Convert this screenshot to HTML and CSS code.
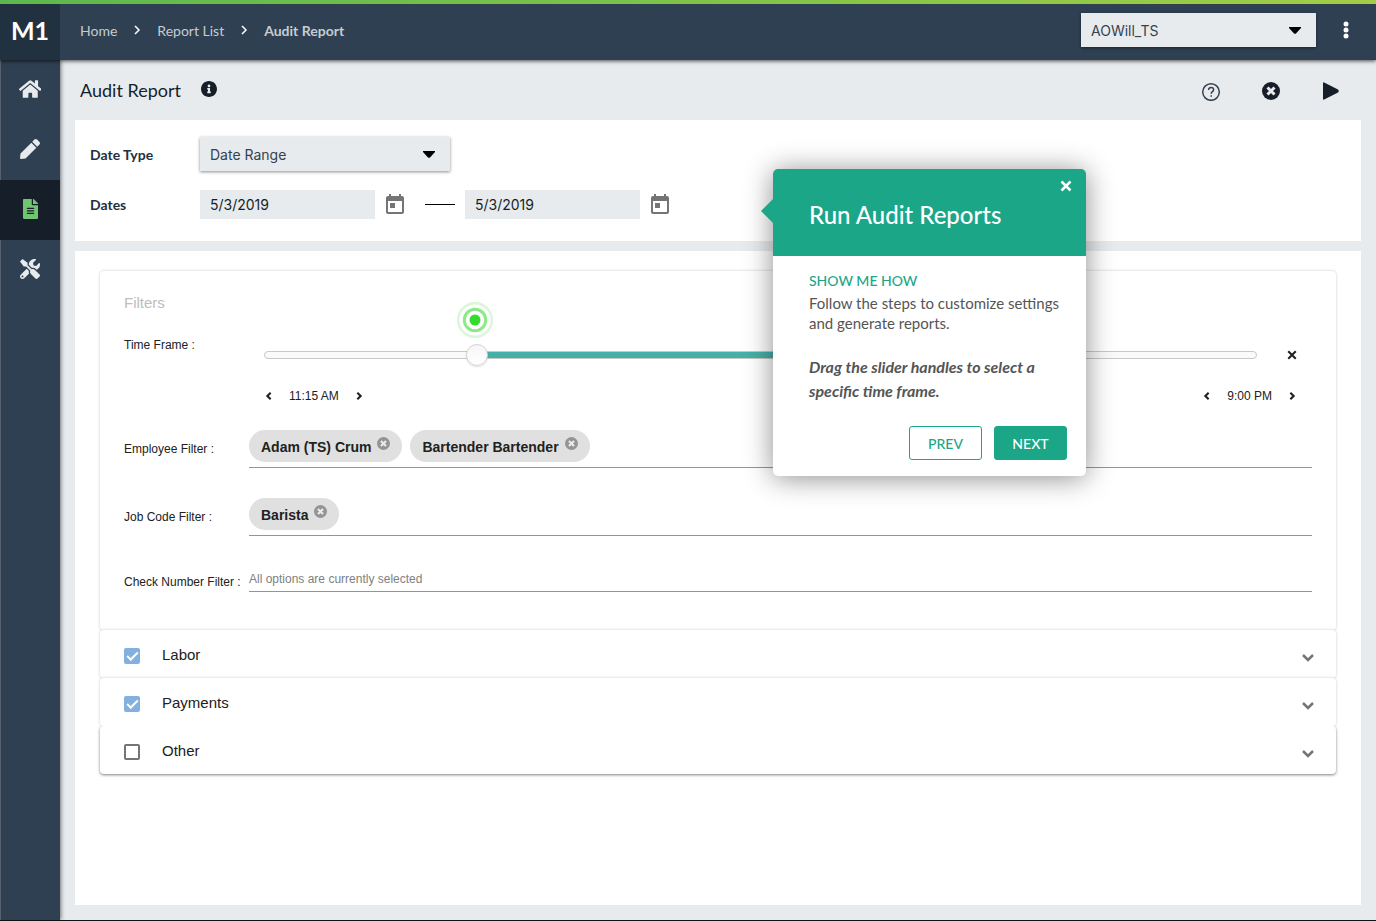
FILE: index.html
```html
<!DOCTYPE html>
<html lang="en">
<head>
  <meta charset="UTF-8">
  <meta name="viewport" content="width=device-width, initial-scale=1">
  <title>Audit Report</title>
  <link rel="stylesheet" href="styles.css">
</head>
<body>

  <svg class="sprite" aria-hidden="true">
    <symbol id="times-circle" viewBox="0 0 18 18">
      <circle cx="9" cy="9" r="9" fill="currentColor"/>
      <path class="cut" d="M5.500 5.500l7 7M12.500 5.500l-7 7"/>
    </symbol>
    <symbol id="times" viewBox="0 0 12 12">
      <path class="line" d="M1.500 1.500l9 9M10.500 1.500l-9 9"/>
    </symbol>
    <symbol id="left" viewBox="0 0 12 12">
      <path class="line" d="M8 2L4 6l4 4"/>
    </symbol>
    <symbol id="right" viewBox="0 0 12 12">
      <path class="line" d="M4 2l4 4-4 4"/>
    </symbol>
    <symbol id="caret" viewBox="0 0 12 7">
      <path d="M0 0h12v1L7 6.500Q6 7.200 5 6.500L0 1z"/>
    </symbol>
    <symbol id="chevron" viewBox="0 0 24 24">
      <path class="line" d="M7 9l5 5 5-5"/>
    </symbol>
    <symbol id="calendar" viewBox="0 0 24 24">
      <path d="M19 3h-1V1h-2v2H8V1H6v2H5c-1.110 0-1.990.9-1.990 2L3 19c0 1.100.890 2 2 2h14c1.100 0 2-.9 2-2V5c0-1.100-.9-2-2-2zm0 16H5V8h14v11zM7 10h5v5H7z"/>
    </symbol>
  </svg>

  <header class="topbar">
    <a class="logo" href="#">M1</a>
    <nav class="breadcrumb" aria-label="Breadcrumb">
      <a href="#">Home</a>
      <svg class="sep" viewBox="0 0 8 10"><path d="M2 1l4 4-4 4"/></svg>
      <a href="#">Report List</a>
      <svg class="sep" viewBox="0 0 8 10"><path d="M2 1l4 4-4 4"/></svg>
      <span class="current">Audit Report</span>
    </nav>
    <div class="select-box store-select">
      <select aria-label="Store">
        <option>AOWill_TS</option>
      </select>
      <svg class="caret"><use href="#caret"/></svg>
    </div>
    <button class="more-btn" aria-label="More options">
      <svg viewBox="0 0 6 18"><circle cx="3" cy="3" r="2.500"/><circle cx="3" cy="9" r="2.500"/><circle cx="3" cy="15" r="2.500"/></svg>
    </button>
  </header>

  <div class="layout">
    <nav class="sidebar" aria-label="Main">
      <a href="#" aria-label="Home">
        <svg class="wide" viewBox="0 0 576 512"><path d="M280.370 148.260L96 300.110V464a16 16 0 0 0 16 16l112.060-.29a16 16 0 0 0 15.920-16V368a16 16 0 0 1 16-16h64a16 16 0 0 1 16 16v95.640a16 16 0 0 0 16 16.050L464 480a16 16 0 0 0 16-16V300L295.670 148.260a12.190 12.190 0 0 0-15.300 0zM571.600 251.470L488 182.560V44.050a12 12 0 0 0-12-12h-56a12 12 0 0 0-12 12v72.610L318.470 43a48 48 0 0 0-61 0L4.340 251.470a12 12 0 0 0-1.600 16.900l25.500 31A12 12 0 0 0 45.150 301l235.220-193.740a12.190 12.190 0 0 1 15.300 0L530.900 301a12 12 0 0 0 16.900-1.600l25.500-31a12 12 0 0 0-1.700-16.930z"/></svg>
      </a>
      <a href="#" aria-label="Edit">
        <svg viewBox="0 0 512 512"><path d="M290.740 93.240l128.020 128.020-277.990 277.990-114.140 12.600C11.350 513.540-1.560 500.620.140 485.340l12.700-114.220 277.900-277.880zm207.200-19.060l-60.110-60.110c-18.750-18.750-49.160-18.750-67.910 0l-56.550 56.550 128.020 128.020 56.550-56.550c18.750-18.760 18.750-49.160 0-67.910z"/></svg>
      </a>
      <a href="#" class="active" aria-label="Reports">
        <svg viewBox="0 0 384 512"><path d="M224 136V0H24C10.700 0 0 10.700 0 24v464c0 13.300 10.700 24 24 24h336c13.300 0 24-10.700 24-24V160H248c-13.200 0-24-10.800-24-24zm64 236c0 6.600-5.400 12-12 12H108c-6.600 0-12-5.400-12-12v-8c0-6.600 5.400-12 12-12h168c6.600 0 12 5.400 12 12v8zm0-64c0 6.600-5.400 12-12 12H108c-6.600 0-12-5.400-12-12v-8c0-6.600 5.400-12 12-12h168c6.600 0 12 5.400 12 12v8zm0-72v8c0 6.600-5.400 12-12 12H108c-6.600 0-12-5.400-12-12v-8c0-6.600 5.400-12 12-12h168c6.600 0 12 5.400 12 12zm96-114.100v6.100H256V0h6.100c6.400 0 12.500 2.500 17 7l97.900 98c4.500 4.500 7 10.600 7 16.900z"/></svg>
      </a>
      <a href="#" aria-label="Tools">
        <svg viewBox="0 0 512 512"><path d="M501.100 395.700L384 278.600c-23.100-23.100-57.600-27.600-85.400-13.900L192 158.100V96L64 0 0 64l96 128h62.100l106.600 106.600c-13.600 27.800-9.200 62.300 13.900 85.400l117.100 117.100c14.600 14.600 38.200 14.600 52.700 0l52.700-52.700c14.500-14.600 14.500-38.200 0-52.700zM331.700 225c28.300 0 54.900 11 74.900 31l19.400 19.400c15.800-6.900 30.800-16.500 43.800-29.500 37.100-37.100 49.700-89.300 37.900-136.700-2.200-9-13.500-12.100-20.100-5.500l-74.400 74.400-67.900-11.300L334 98.900l74.400-74.400c6.600-6.600 3.400-17.900-5.700-20.200-47.400-11.700-99.600.9-136.600 37.900-28.500 28.500-41.900 66.100-41.200 103.600l82.100 82.100c8.100-1.900 16.500-2.900 24.700-2.900zm-103.900 82l-56.700-56.700L18.700 402.800c-25 25-25 65.500 0 90.500s65.500 25 90.500 0l123.600-123.600c-7.600-19.900-9.900-41.600-5-62.700zM64 472c-13.200 0-24-10.800-24-24 0-13.300 10.700-24 24-24s24 10.700 24 24c0 13.200-10.700 24-24 24z"/></svg>
      </a>
    </nav>

    <main class="content">
      <div class="title-bar">
        <h1>Audit Report</h1>
        <button class="icon-btn info-btn" aria-label="Info">
          <svg viewBox="8 8 496 496"><path d="M256 8C119.043 8 8 119.083 8 256c0 136.997 111.043 248 248 248s248-111.003 248-248C504 119.083 392.957 8 256 8zm0 110c23.196 0 42 18.804 42 42s-18.804 42-42 42-42-18.804-42-42 18.804-42 42-42zm56 254c0 6.627-5.373 12-12 12h-88c-6.627 0-12-5.373-12-12v-24c0-6.627 5.373-12 12-12h12v-64h-12c-6.627 0-12-5.373-12-12v-24c0-6.627 5.373-12 12-12h64c6.627 0 12 5.373 12 12v100h12c6.627 0 12 5.373 12 12v24z"/></svg>
        </button>
        <div class="actions">
          <button class="icon-btn" aria-label="Help">
            <svg class="help" viewBox="0 0 20 20"><circle cx="10" cy="11" r="8.300"/><path d="M7.600 9c0-1.600 1-2.500 2.500-2.500s2.500.9 2.500 2.200c0 1.800-2.400 2-2.400 4M10.200 14.300v1.400"/></svg>
          </button>
          <button class="icon-btn" aria-label="Cancel">
            <svg><use href="#times-circle"/></svg>
          </button>
          <button class="icon-btn" aria-label="Run report">
            <svg viewBox="0 0 18 18"><path d="M1 1.200Q1 0 2.200.4L16 7.600q1.800 1.400 0 2.800L2.200 17.600Q1 18 1 16.800z"/></svg>
          </button>
        </div>
      </div>

      <section class="panel date-panel">
        <div class="date-row">
          <label for="dateType">Date Type</label>
          <div class="select-box date-select">
            <select id="dateType">
              <option>Date Range</option>
            </select>
            <svg class="caret"><use href="#caret"/></svg>
          </div>
        </div>
        <div class="date-row">
          <label for="startDate">Dates</label>
          <input type="text" id="startDate" value="5/3/2019">
          <button class="calendar-btn" aria-label="Pick start date"><svg><use href="#calendar"/></svg></button>
          <span class="dash"></span>
          <input type="text" id="endDate" value="5/3/2019" aria-label="End date">
          <button class="calendar-btn" aria-label="Pick end date"><svg><use href="#calendar"/></svg></button>
        </div>
      </section>

      <section class="panel report-panel">
        <div class="card filters">
          <h2>Filters</h2>

          <div class="filter-row time-row">
            <label for="timeStart">Time Frame :</label>
            <div class="time-control">
              <div class="slider-line">
                <div class="slider">
                  <div class="track"><div class="fill" style="margin-left: 21%; width: 53%"></div></div>
                  <input type="range" id="timeStart" min="450" max="1530" step="15" value="675">
                  <input type="range" id="timeEnd" min="450" max="1530" step="15" value="1260" aria-label="End time">
                  <svg class="beacon" viewBox="0 0 36 36">
                    <circle class="outer" cx="18" cy="18" r="16.800"/>
                    <circle class="ring" cx="18" cy="18" r="10.700"/>
                    <circle class="dot" cx="18" cy="18" r="5.500"/>
                  </svg>
                </div>
                <button class="small-btn" aria-label="Clear time frame"><svg><use href="#times"/></svg></button>
              </div>
              <div class="times">
                <div class="stepper">
                  <button class="small-btn" aria-label="Earlier start"><svg><use href="#left"/></svg></button>
                  <span>11:15 AM</span>
                  <button class="small-btn" aria-label="Later start"><svg><use href="#right"/></svg></button>
                </div>
                <div class="stepper">
                  <button class="small-btn" aria-label="Earlier end"><svg><use href="#left"/></svg></button>
                  <span>9:00 PM</span>
                  <button class="small-btn" aria-label="Later end"><svg><use href="#right"/></svg></button>
                </div>
              </div>
            </div>
          </div>

          <div class="filter-row">
            <span class="filter-label">Employee Filter :</span>
            <div class="chips">
              <span class="chip">Adam (TS) Crum <button aria-label="Remove Adam (TS) Crum"><svg><use href="#times-circle"/></svg></button></span>
              <span class="chip">Bartender Bartender <button aria-label="Remove Bartender Bartender"><svg><use href="#times-circle"/></svg></button></span>
            </div>
          </div>

          <div class="filter-row">
            <span class="filter-label">Job Code Filter :</span>
            <div class="chips">
              <span class="chip">Barista <button aria-label="Remove Barista"><svg><use href="#times-circle"/></svg></button></span>
            </div>
          </div>

          <div class="filter-row check-row">
            <label for="checkNumber">Check Number Filter :</label>
            <input type="text" id="checkNumber" placeholder="All options are currently selected">
          </div>
        </div>

        <div class="card option">
          <input type="checkbox" id="labor" checked>
          <label for="labor">Labor</label>
          <button aria-label="Expand Labor"><svg><use href="#chevron"/></svg></button>
        </div>
        <div class="card option">
          <input type="checkbox" id="payments" checked>
          <label for="payments">Payments</label>
          <button aria-label="Expand Payments"><svg><use href="#chevron"/></svg></button>
        </div>
        <div class="card option">
          <input type="checkbox" id="other">
          <label for="other">Other</label>
          <button aria-label="Expand Other"><svg><use href="#chevron"/></svg></button>
        </div>
      </section>

      <aside class="guide" role="dialog" aria-labelledby="guideTitle">
        <div class="guide-header">
          <button class="guide-close" aria-label="Close"><svg><use href="#times"/></svg></button>
          <h2 id="guideTitle">Run Audit Reports</h2>
        </div>
        <div class="guide-body">
          <h3>SHOW ME HOW</h3>
          <p>Follow the steps to customize settings and generate reports.</p>
          <p class="tip">Drag the slider handles to select a specific time frame.</p>
          <div class="guide-buttons">
            <button class="prev">PREV</button>
            <button class="next">NEXT</button>
          </div>
        </div>
      </aside>
    </main>
  </div>

</body>
</html>
```

FILE: styles.css
```css
* {
  box-sizing: border-box;
}

body {
  margin: 0;
  min-height: 100vh;
  display: flex;
  flex-direction: column;
  border-bottom: 1px solid #111;
  background: #e7ebee;
  font-family: "Liberation Sans", Arial, sans-serif;
  color: #212121;
}

button {
  display: flex;
  align-items: center;
  justify-content: center;
  padding: 0;
  border: none;
  background: none;
  color: inherit;
  cursor: pointer;
}

a {
  color: inherit;
  text-decoration: none;
}

.sprite {
  position: absolute;
  width: 0;
  height: 0;
}

.line {
  fill: none;
  stroke: currentColor;
  stroke-width: 2.5;
}

.cut {
  fill: none;
  stroke: #e7ebee;
  stroke-width: 3;
}

/* top bar */
.topbar {
  position: relative;
  z-index: 2;
  height: 60px;
  display: flex;
  align-items: center;
  padding-bottom: 4px;
  border-top: 4px solid;
  border-image: linear-gradient(to right, #5cb84d, #a2cd45) 1;
  background: #2f4052;
  box-shadow: 0 1px 4px rgba(0,0,0,0.7);
  font-family: Lato, sans-serif;
}

.logo {
  align-self: flex-start;
  width: 60px;
  height: 56px;
  line-height: 52px;
  text-align: center;
  background: #22313f;
  color: white;
  font-size: 25px;
  font-weight: bold;
}

.breadcrumb {
  flex: 1;
  display: flex;
  align-items: center;
  gap: 16px;
  padding-left: 20px;
  font-size: 14px;
  color: #c5ccd3;
}

.breadcrumb .current {
  font-weight: bold;
}

.sep {
  width: 8px;
  height: 10px;
  fill: none;
  stroke: white;
  stroke-width: 1.5;
}

.select-box {
  display: grid;
  align-items: center;
  background: #e7ebee;
  box-shadow: 0 1px 3px rgba(0,0,0,0.45);
}

.select-box select {
  grid-area: 1 / 1;
  width: 100%;
  height: 34px;
  padding: 0 10px;
  border: none;
  appearance: none;
  background: transparent;
  font-family: Inter, sans-serif;
  font-size: 14px;
  color: #34424f;
}

.caret {
  grid-area: 1 / 1;
  justify-self: end;
  width: 12px;
  height: 7px;
  margin-right: 15px;
  pointer-events: none;
}

.store-select {
  width: 235px;
}

.more-btn {
  width: 60px;
  height: 52px;
}

.more-btn svg {
  width: 6px;
  height: 18px;
  fill: white;
}

/* side menu */
.layout {
  flex: 1;
  display: flex;
}

.sidebar {
  position: relative;
  z-index: 1;
  width: 60px;
  background: #2f4052;
  box-shadow: 1px 0 4px rgba(0,0,0,0.5), inset 1px 0 #56636f;
}

.sidebar a {
  height: 60px;
  padding-bottom: 3px;
  display: flex;
  align-items: center;
  justify-content: center;
}

.sidebar svg {
  height: 20px;
  fill: #e7ebee;
}

.sidebar .active {
  background: #161f29;
}

.sidebar .active svg {
  fill: #72c472;
}

/* main area */
.content {
  position: relative;
  flex: 1;
  min-width: 0;
  display: flex;
  flex-direction: column;
  gap: 10px;
  padding: 0 15px 15px;
}

.title-bar {
  height: 60px;
  margin-bottom: -10px;
  padding: 0 0 0 5px;
  display: flex;
  align-items: center;
  color: #161f29;
}

.title-bar h1 {
  margin: 0 20px 0 0;
  font-family: Lato, sans-serif;
  font-size: 18px;
  font-weight: normal;
}

.icon-btn svg {
  width: 18px;
  height: 18px;
  fill: currentColor;
}

.info-btn svg {
  width: 16px;
  height: 16px;
  margin-bottom: 3px;
}

.actions {
  display: flex;
  margin-left: auto;
}

.actions .icon-btn {
  width: 60px;
  height: 60px;
  padding-top: 2px;
}

.actions .help {
  width: 20px;
  height: 20px;
  fill: none;
  stroke: #34424f;
  stroke-width: 1.5;
}

.panel {
  background: white;
}

.date-panel {
  padding: 17px 15px 22px;
}

.date-row {
  display: flex;
  align-items: center;
}

.date-row + .date-row {
  margin-top: 19px;
}

.date-row label {
  width: 110px;
  font-family: Lato, sans-serif;
  font-size: 14px;
  font-weight: bold;
  color: #22313f;
}

.date-row input {
  width: 175px;
  height: 29px;
  padding: 0 10px;
  border: none;
  background: #e7ebee;
  font-family: Inter, sans-serif;
  font-size: 14px;
  color: #161f29;
}

.date-select {
  width: 250px;
}

.calendar-btn {
  width: 40px;
}

.calendar-btn svg {
  width: 24px;
  height: 24px;
  fill: #757575;
}

.dash {
  width: 30px;
  height: 1px;
  margin: 0 10px;
  background: black;
}

/* filters */
.report-panel {
  flex: 1;
  padding: 20px 25px;
}

.card {
  border-radius: 4px;
  background: white;
  box-shadow: 0 0 3px rgba(0,0,0,0.22);
}

.filters {
  padding: 20px 24px 38px;
}

.filters h2 {
  margin: 0 0 20px;
  line-height: 24px;
  font-size: 15px;
  font-weight: normal;
  color: #bdbdbd;
}

.filter-row {
  display: grid;
  grid-template-columns: 125px 1fr;
  align-items: center;
  margin-top: 30px;
  font-size: 12px;
  line-height: 20px;
}

.time-row {
  align-items: start;
  margin: 0 0 -8px;
}

.time-control {
  padding: 8px 15px 0;
}

.slider-line {
  display: flex;
  align-items: center;
  gap: 30px;
}

.slider {
  position: relative;
  flex: 1;
  height: 24px;
  display: grid;
  align-items: center;
}

.track {
  grid-area: 1 / 1;
  height: 8px;
  border: 1px solid #c8c8c8;
  border-radius: 4px;
  background: #fafafa;
}

.fill {
  height: 6px;
  background: #45b0a8;
}

.slider input {
  grid-area: 1 / 1;
  width: 100%;
  height: 22px;
  margin: 0;
  appearance: none;
  background: none;
  pointer-events: none;
}

.slider input::-webkit-slider-thumb {
  appearance: none;
  width: 22px;
  height: 22px;
  border: 1px solid #d4d4d4;
  border-radius: 50%;
  background: linear-gradient(#f6f6f6, white);
  box-shadow: 0 1px 2px rgba(0,0,0,0.12);
  pointer-events: auto;
}

.beacon {
  position: absolute;
  bottom: 29px;
  left: 21%;
  width: 36px;
  height: 36px;
  margin-left: -16px;
  fill: none;
}

.beacon .outer {
  stroke: #d9f7d6;
  stroke-width: 2.4;
}

.beacon .ring {
  stroke: #8ce987;
  stroke-width: 3;
}

.beacon .dot {
  fill: #34dc2e;
}

.small-btn,
.small-btn svg {
  width: 10px;
  height: 12px;
}

.times {
  display: flex;
  justify-content: space-between;
  margin-top: 17px;
}

.stepper {
  height: 24px;
  display: flex;
  align-items: center;
  gap: 15px;
}

.chips {
  display: flex;
  gap: 8px;
  padding-bottom: 5px;
  border-bottom: 1px solid #949494;
}

.chip {
  display: flex;
  align-items: center;
  gap: 6px;
  height: 32px;
  padding: 2px 12px 0;
  border-radius: 16px;
  background: #e0e0e0;
  font-size: 14px;
  font-weight: bold;
}

.chip svg {
  width: 13px;
  height: 13px;
  margin-bottom: 8px;
  color: #949494;
}

.check-row {
  align-items: end;
}

.check-row input {
  width: 100%;
  height: 26px;
  padding: 0;
  border: none;
  border-bottom: 1px solid #949494;
  font-family: "Liberation Sans", Arial, sans-serif;
  font-size: 12px;
}

.check-row input::placeholder {
  color: #808080;
}

/* report options */
.option {
  display: flex;
  align-items: center;
  height: 48px;
  padding: 0 16px 0 24px;
  font-size: 15px;
}

.option:last-child {
  box-shadow: 0 1px 3px rgba(0,0,0,0.5);
  clip-path: inset(0 -4px -4px);
}

.option input {
  display: grid;
  place-items: center;
  width: 16px;
  height: 16px;
  margin: 3px 22px 0 0;
  border: 2px solid #757575;
  border-radius: 2px;
  appearance: none;
}

.option input:checked {
  border-color: #82b1e0;
  background: #82b1e0;
}

.option input:checked::before {
  content: "";
  width: 9px;
  height: 4px;
  border: solid white;
  border-width: 0 0 2px 2px;
  transform: translateY(-1px) rotate(-45deg);
}

.option button {
  margin: 7px 0 0 auto;
}

.option button svg {
  width: 24px;
  height: 24px;
  color: #757575;
}

/* guide popup */
.guide {
  position: absolute;
  z-index: 3;
  top: 109px;
  right: 290px;
  width: 313px;
  border-radius: 5px;
  background: white;
  box-shadow: 0 2px 28px rgba(0,0,0,0.45);
  font-family: Lato, sans-serif;
  color: #555;
}

.guide-header {
  position: relative;
  height: 87px;
  padding: 11px 14px 0 36px;
  border-radius: 5px 5px 0 0;
  background: #1ca688;
  color: white;
}

.guide-header::before {
  content: "";
  position: absolute;
  top: 29px;
  left: -12px;
  border: solid transparent;
  border-width: 13px 13px 13px 0;
  border-right-color: #1ca688;
}

.guide-close {
  margin-left: auto;
}

.guide-close svg {
  width: 12px;
  height: 12px;
}

.guide-header h2 {
  margin: 8px 0 0;
  line-height: 30px;
  font-size: 24px;
  font-weight: 500;
}

.guide-body {
  padding: 15px 19px 16px 36px;
  font-size: 15px;
}

.guide-body h3 {
  margin: 0 0 2px;
  line-height: 20px;
  font-size: 14px;
  font-weight: 500;
  color: #1ca688;
}

.guide-body p {
  margin: 0;
  line-height: 20px;
}

.guide-body .tip {
  margin: 22px 0 23px;
  line-height: 24px;
  font-size: 16px;
  font-style: italic;
  font-weight: bold;
}

.guide-buttons {
  display: flex;
  justify-content: flex-end;
  gap: 12px;
}

.guide-buttons button {
  width: 73px;
  height: 34px;
  border: 1px solid #1ca688;
  border-radius: 3px;
  font-family: Lato, sans-serif;
  font-size: 14px;
  font-weight: 500;
  color: #1ca688;
}

.guide-buttons .next {
  background: #1ca688;
  color: white;
}
```
